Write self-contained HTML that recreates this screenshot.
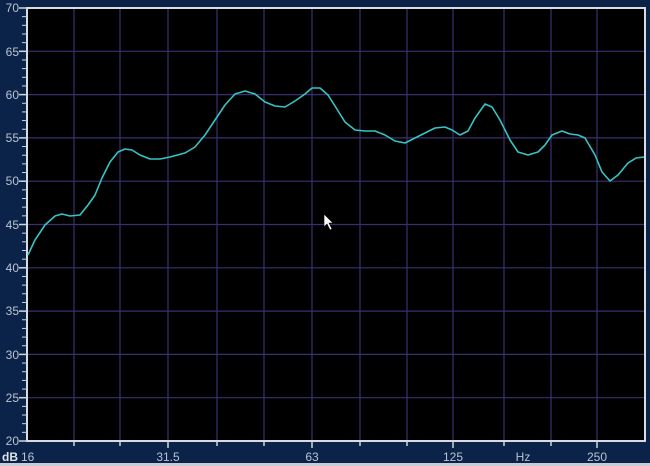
<!DOCTYPE html>
<html><head><style>
html,body{margin:0;padding:0;background:#0b2348;}
svg{display:block}
text{font-family:"Liberation Sans",sans-serif;font-size:12px;fill:#b9c3d3}
</style></head><body>
<svg width="650" height="466" viewBox="0 0 650 466">
<rect width="650" height="466" fill="#0b2348"/>
<rect x="0" y="463" width="650" height="3" fill="#c8ccd4"/>
<rect x="27" y="8" width="618" height="433" fill="#000"/>
<g stroke="#3b3170" stroke-width="1.2">
<line x1="27" x2="645" y1="51.3" y2="51.3"/><line x1="27" x2="645" y1="94.6" y2="94.6"/>
<line x1="27" x2="645" y1="137.9" y2="137.9"/><line x1="27" x2="645" y1="181.2" y2="181.2"/>
<line x1="27" x2="645" y1="224.5" y2="224.5"/><line x1="27" x2="645" y1="267.8" y2="267.8"/>
<line x1="27" x2="645" y1="311.1" y2="311.1"/><line x1="27" x2="645" y1="354.4" y2="354.4"/>
<line x1="27" x2="645" y1="397.7" y2="397.7"/>
<line y1="8" y2="441" x1="74" x2="74"/><line y1="8" y2="441" x1="120" x2="120"/>
<line y1="8" y2="441" x1="168" x2="168"/><line y1="8" y2="441" x1="217" x2="217"/>
<line y1="8" y2="441" x1="264" x2="264"/><line y1="8" y2="441" x1="312" x2="312"/>
<line y1="8" y2="441" x1="360" x2="360"/><line y1="8" y2="441" x1="407" x2="407"/>
<line y1="8" y2="441" x1="453" x2="453"/><line y1="8" y2="441" x1="504" x2="504"/>
<line y1="8" y2="441" x1="551" x2="551"/><line y1="8" y2="441" x1="597" x2="597"/>
</g>
<rect x="27" y="8" width="618" height="433" fill="none" stroke="#d8dce2" stroke-width="2"/>
<g id="ticks" stroke="#d0d4da" stroke-width="1"></g>
<g stroke="#d0d4da" stroke-width="1.5">
<line x1="19" x2="27" y1="8" y2="8"/><line x1="19" x2="27" y1="51.3" y2="51.3"/><line x1="19" x2="27" y1="94.6" y2="94.6"/><line x1="19" x2="27" y1="137.9" y2="137.9"/><line x1="19" x2="27" y1="181.2" y2="181.2"/><line x1="19" x2="27" y1="224.5" y2="224.5"/><line x1="19" x2="27" y1="267.8" y2="267.8"/><line x1="19" x2="27" y1="311.1" y2="311.1"/><line x1="19" x2="27" y1="354.4" y2="354.4"/><line x1="19" x2="27" y1="397.7" y2="397.7"/><line x1="19" x2="27" y1="441" y2="441"/>
<line x1="74" x2="74" y1="441" y2="446"/><line x1="120" x2="120" y1="441" y2="446"/><line x1="168" x2="168" y1="441" y2="448"/><line x1="217" x2="217" y1="441" y2="446"/><line x1="264" x2="264" y1="441" y2="446"/><line x1="312" x2="312" y1="441" y2="448"/><line x1="360" x2="360" y1="441" y2="446"/><line x1="407" x2="407" y1="441" y2="446"/><line x1="453" x2="453" y1="441" y2="448"/><line x1="504" x2="504" y1="441" y2="446"/><line x1="551" x2="551" y1="441" y2="446"/><line x1="597" x2="597" y1="441" y2="448"/>
</g>
<g text-anchor="end">
<text x="19" y="12">70</text><text x="19" y="56">65</text><text x="19" y="99">60</text><text x="19" y="142">55</text><text x="19" y="185">50</text><text x="19" y="229">45</text><text x="19" y="272">40</text><text x="19" y="315">35</text><text x="19" y="359">30</text><text x="19" y="402">25</text><text x="19" y="445">20</text>
</g>
<text x="2" y="461" style="font-weight:bold;fill:#e0e4ea">dB</text>
<text x="21" y="461">16</text>
<text x="168" y="461" text-anchor="middle">31.5</text>
<text x="312" y="461" text-anchor="middle">63</text>
<text x="453" y="461" text-anchor="middle">125</text>
<text x="523" y="461" text-anchor="middle">Hz</text>
<text x="597" y="461" text-anchor="middle">250</text>
<polyline fill="none" stroke="#36c4c4" stroke-width="1.6" stroke-linejoin="round" points="28,255 35,240 45,225 55,216 62,214 70,216 80,215 88,205 95,195 102,178 110,162 118,152 125,149 132,150 140,155 150,159 160,159 170,157 185,153 195,147 205,135 215,120 225,105 235,94 245,91 255,94 265,102 275,106 285,107 295,101 305,94 312,88 320,88 328,95 335,106 345,122 355,130 365,131 375,131 385,135 395,141 405,143 415,138 425,133 435,128 445,127 452,130 460,135 468,131 475,118 485,104 492,107 500,120 510,140 518,152 528,155 538,152 545,145 552,135 562,131 570,134 578,135 585,138 595,155 602,172 610,181 618,175 628,163 636,158 644,157"/>
<path d="M324 214 L324 227 L327 224 L330 230 L332 229 L329 223 L333 223 Z" fill="#fff" stroke="#000" stroke-width="0.6"/>
</svg>
<script>
var g=document.getElementById('ticks');var s='';
for(var i=0;i<=50;i++){var y=8+i*8.66;s+='<line x1="22" x2="27" y1="'+y+'" y2="'+y+'"/>';}
g.innerHTML=s;
</script>
</body></html>
